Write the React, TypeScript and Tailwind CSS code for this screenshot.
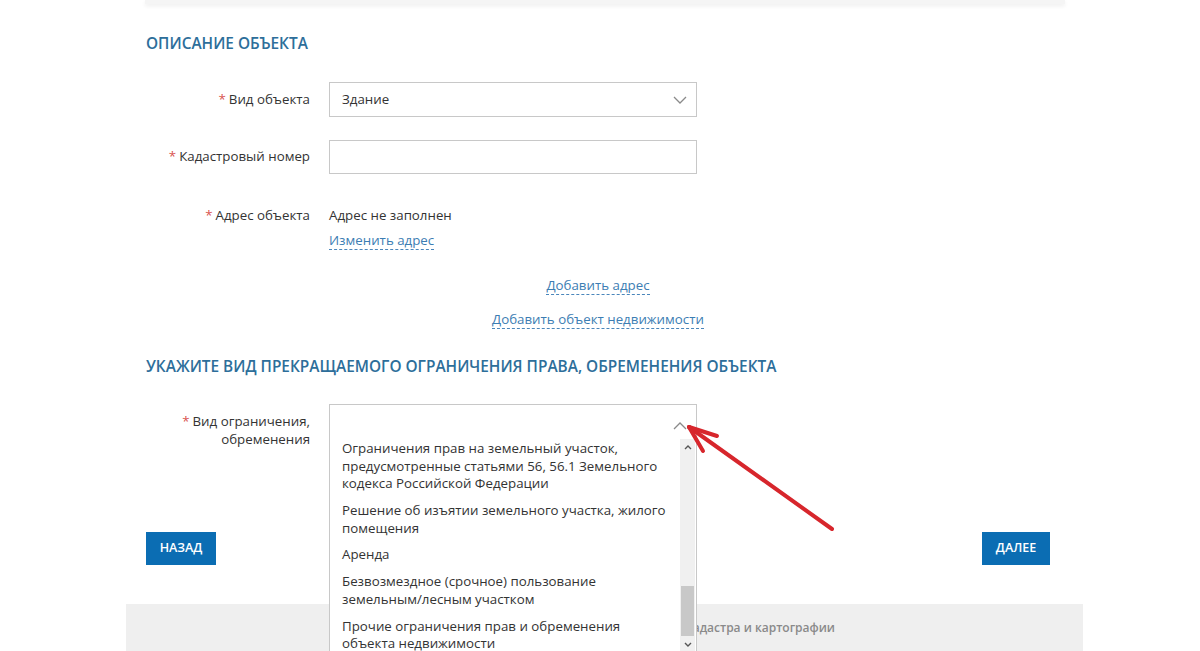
import React from "react";

const font = { fontFamily: '"Open Sans", "Noto Sans", sans-serif' };

function Req() {
  return <span className="text-[#d9534f] mr-[3px]">*</span>;
}

function ChevronDown() {
  return (
    <svg width="14" height="8" viewBox="0 0 14 8" fill="none">
      <path d="M1 1l6 6 6-6" stroke="#8a8a8a" strokeWidth="1.3" />
    </svg>
  );
}

function ChevronUp() {
  return (
    <svg width="14" height="8" viewBox="0 0 14 8" fill="none">
      <path d="M1 7l6-6 6 6" stroke="#8a8a8a" strokeWidth="1.3" />
    </svg>
  );
}

const options = [
  "Ограничения прав на земельный участок, предусмотренные статьями 56, 56.1 Земельного кодекса Российской Федерации",
  "Решение об изъятии земельного участка, жилого помещения",
  "Аренда",
  "Безвозмездное (срочное) пользование земельным/лесным участком",
  "Прочие ограничения прав и обременения объекта недвижимости",
];

export default function App() {
  return (
    <div className="relative w-[1200px] h-[651px] overflow-hidden bg-white text-[#333]" style={font}>
      {/* top strip */}
      <div className="ml-[145px] w-[920px] h-[4px] bg-[#f5f5f5] shadow-[0_2px_4px_rgba(0,0,0,0.07)]" />

      <div className="ml-[146px] w-[904px] flex flex-col">
        <h2 className="mt-[30px] text-[15.4px] leading-[20px] font-semibold text-[#2d6e9a] uppercase">
          Описание объекта
        </h2>

        {/* Вид объекта */}
        <div className="mt-[28px] flex items-center">
          <div className="w-[164px] text-right text-[13.3px]">
            <Req />Вид объекта
          </div>
          <div className="ml-[19px] w-[368px] h-[35px] border border-[#c8c8c8] flex items-center justify-between pl-[12px] pr-[9px] text-[13.3px]">
            <span>Здание</span>
            <ChevronDown />
          </div>
        </div>

        {/* Кадастровый номер */}
        <div className="mt-[23px] flex items-center">
          <div className="w-[164px] text-right text-[13.3px]">
            <Req />Кадастровый номер
          </div>
          <div className="ml-[19px] w-[368px] h-[34px] border border-[#c8c8c8]" />
        </div>

        {/* Адрес объекта */}
        <div className="mt-[32px] flex items-start">
          <div className="w-[164px] text-right text-[13.3px] leading-[18px]">
            <Req />Адрес объекта
          </div>
          <div className="ml-[19px] flex flex-col items-start text-[13.3px] leading-[18px]">
            <span>Адрес не заполнен</span>
            <span className="mt-[7px] text-[#3c7db3] border-b border-dashed border-[#4a86bb]">Изменить адрес</span>
          </div>
        </div>

        <div className="mt-[26px] flex flex-col items-center text-[13.3px] leading-[18px] text-[#3c7db3]">
          <span className="border-b border-dashed border-[#4a86bb]">Добавить адрес</span>
          <span className="mt-[15px] border-b border-dashed border-[#4a86bb]">Добавить объект недвижимости</span>
        </div>

        <h2 className="mt-[28px] text-[15.4px] leading-[20px] font-semibold text-[#2d6e9a] uppercase">
          Укажите вид прекращаемого ограничения права, обременения объекта
        </h2>

        {/* Вид ограничения */}
        <div className="mt-[27px] flex items-start">
          <div className="w-[164px] pt-[8px] text-right text-[13.3px] leading-[18px]">
            <Req />Вид ограничения,
            <br />
            обременения
          </div>
          <div className="relative ml-[19px] w-[368px]">
            <div className="h-[30px] border border-b-0 border-[#c8c8c8] flex items-end justify-end pr-[9px] pb-[4px]">
              <ChevronUp />
            </div>
            <div className="absolute left-0 top-[30px] w-[368px] h-[240px] bg-white border border-t-0 border-[#c8c8c8] flex z-10">
              <div className="w-[351px] pt-[1.5px] pl-[12px] pr-[14px] text-[13.3px] leading-[17.6px] text-[#333]">
                {options.map((o) => (
                  <div key={o} className="py-[4.6px]">
                    {o}
                  </div>
                ))}
              </div>
              <div className="w-[15px] mr-[1px] mt-[5px] bg-[#f0f0f0] flex flex-col items-center">
                <div className="h-[16px] flex items-center justify-center">
                  <svg width="8" height="5" viewBox="0 0 8 5"><path d="M1 4l3-3 3 3" stroke="#555" strokeWidth="1.4" fill="none" /></svg>
                </div>
                <div className="mt-[131px] w-[13px] h-[50px] bg-[#c8c8c8]" />
                <div className="h-[16px] flex items-center justify-center">
                  <svg width="8" height="5" viewBox="0 0 8 5"><path d="M1 1l3 3 3-3" stroke="#555" strokeWidth="1.4" fill="none" /></svg>
                </div>
              </div>
            </div>
          </div>
        </div>

        {/* Buttons */}
        <div className="mt-[84px] flex justify-between">
          <button className="w-[70px] h-[33px] bg-[#0b6db3] text-white text-[12.5px] font-semibold uppercase">
            Назад
          </button>
          <button className="w-[68px] h-[33px] bg-[#0b6db3] text-white text-[12.5px] font-semibold uppercase">
            Далее
          </button>
        </div>
      </div>

      {/* footer */}
      <div className="mt-[39px] ml-[126px] w-[957px] h-[60px] bg-[#efefef]">
        <div className="w-[709px] pt-[15px] text-right text-[12px] leading-[18px] font-semibold text-[#8a8a8a] whitespace-nowrap">
          Федеральная служба государственной регистрации, кадастра и картографии
        </div>
      </div>

      {/* red arrow */}
      <svg className="absolute left-0 top-0 pointer-events-none z-20" width="1200" height="651">
        <g stroke="#d7262c" strokeWidth="4" strokeLinecap="round" fill="none">
          <path d="M832 529L689 427" />
          <path d="M689 427L717 436" />
          <path d="M689 427L703 451" />
        </g>
      </svg>
    </div>
  );
}
